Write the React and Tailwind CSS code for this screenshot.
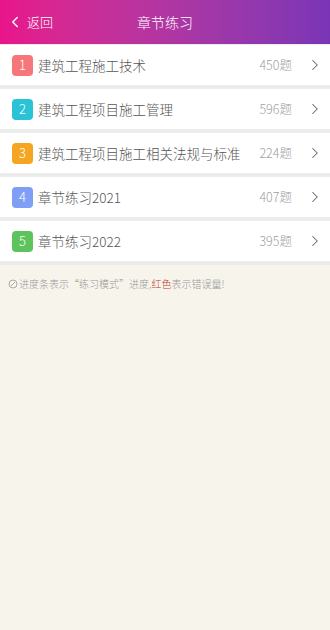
import { ChevronLeft, ChevronRight } from "lucide-react";

const chapters = [
  { n: 1, title: "建筑工程施工技术", count: 450, color: "bg-[#f6777a]" },
  { n: 2, title: "建筑工程项目施工管理", count: 596, color: "bg-[#29c2d6]" },
  { n: 3, title: "建筑工程项目施工相关法规与标准", count: 224, color: "bg-[#f5a51f]" },
  { n: 4, title: "章节练习2021", count: 407, color: "bg-[#7f9ef5]" },
  { n: 5, title: "章节练习2022", count: 395, color: "bg-[#5cc35d]" },
];

export default function App() {
  return (
    <div
      className="w-[330px] h-[630px] bg-[#f7f4ec] flex flex-col"
      style={{ fontFamily: '"Noto Sans CJK SC", Roboto, sans-serif' }}
    >
      <div className="h-[44px] shrink-0 flex items-center bg-gradient-to-r from-[#e9138a] to-[#7a35b6] text-white relative">
        <div className="flex items-center pl-[6px] gap-[3px]">
          <ChevronLeft size={18} strokeWidth={2} />
          <span className="text-[13px] font-light">返回</span>
        </div>
        <div className="absolute inset-0 flex items-center justify-center text-[14px] font-light pointer-events-none">
          章节练习
        </div>
      </div>

      <div className="bg-[#ececec] flex flex-col gap-[4px] pt-[1px] pb-[4px]">
        {chapters.map((c) => (
          <div key={c.n} className="h-[40px] bg-white flex items-center pl-[12px] pr-[6px]">
            <div
              className={`w-[21px] h-[21px] rounded-[4px] ${c.color} text-white text-[13px] font-light flex items-center justify-center shrink-0`}
            >
              {c.n}
            </div>
            <div className="ml-[5px] text-[13.5px] font-light text-[#555] flex-1 truncate">{c.title}</div>
            <div className="text-[12.5px] font-light text-[#a0a0a0] ml-[6px]">{c.count}题</div>
            <ChevronRight size={18} strokeWidth={1.4} className="text-[#666] ml-[14px]" />
          </div>
        ))}
      </div>

      <div className="px-[8px] pt-[11px] text-[10px] font-light text-[#999] flex items-center">
        <svg width="10" height="10" viewBox="0 0 10 10" className="mr-[1px]">
          <circle cx="5" cy="5" r="4" fill="none" stroke="#aaa" strokeWidth="1" />
          <path d="M3 7 L7 3" stroke="#aaa" strokeWidth="1" />
        </svg>
        <span>
          进度条表示“练习模式”进度,<span className="text-[#c0392b]">红色</span>表示错误量!
        </span>
      </div>
    </div>
  );
}
